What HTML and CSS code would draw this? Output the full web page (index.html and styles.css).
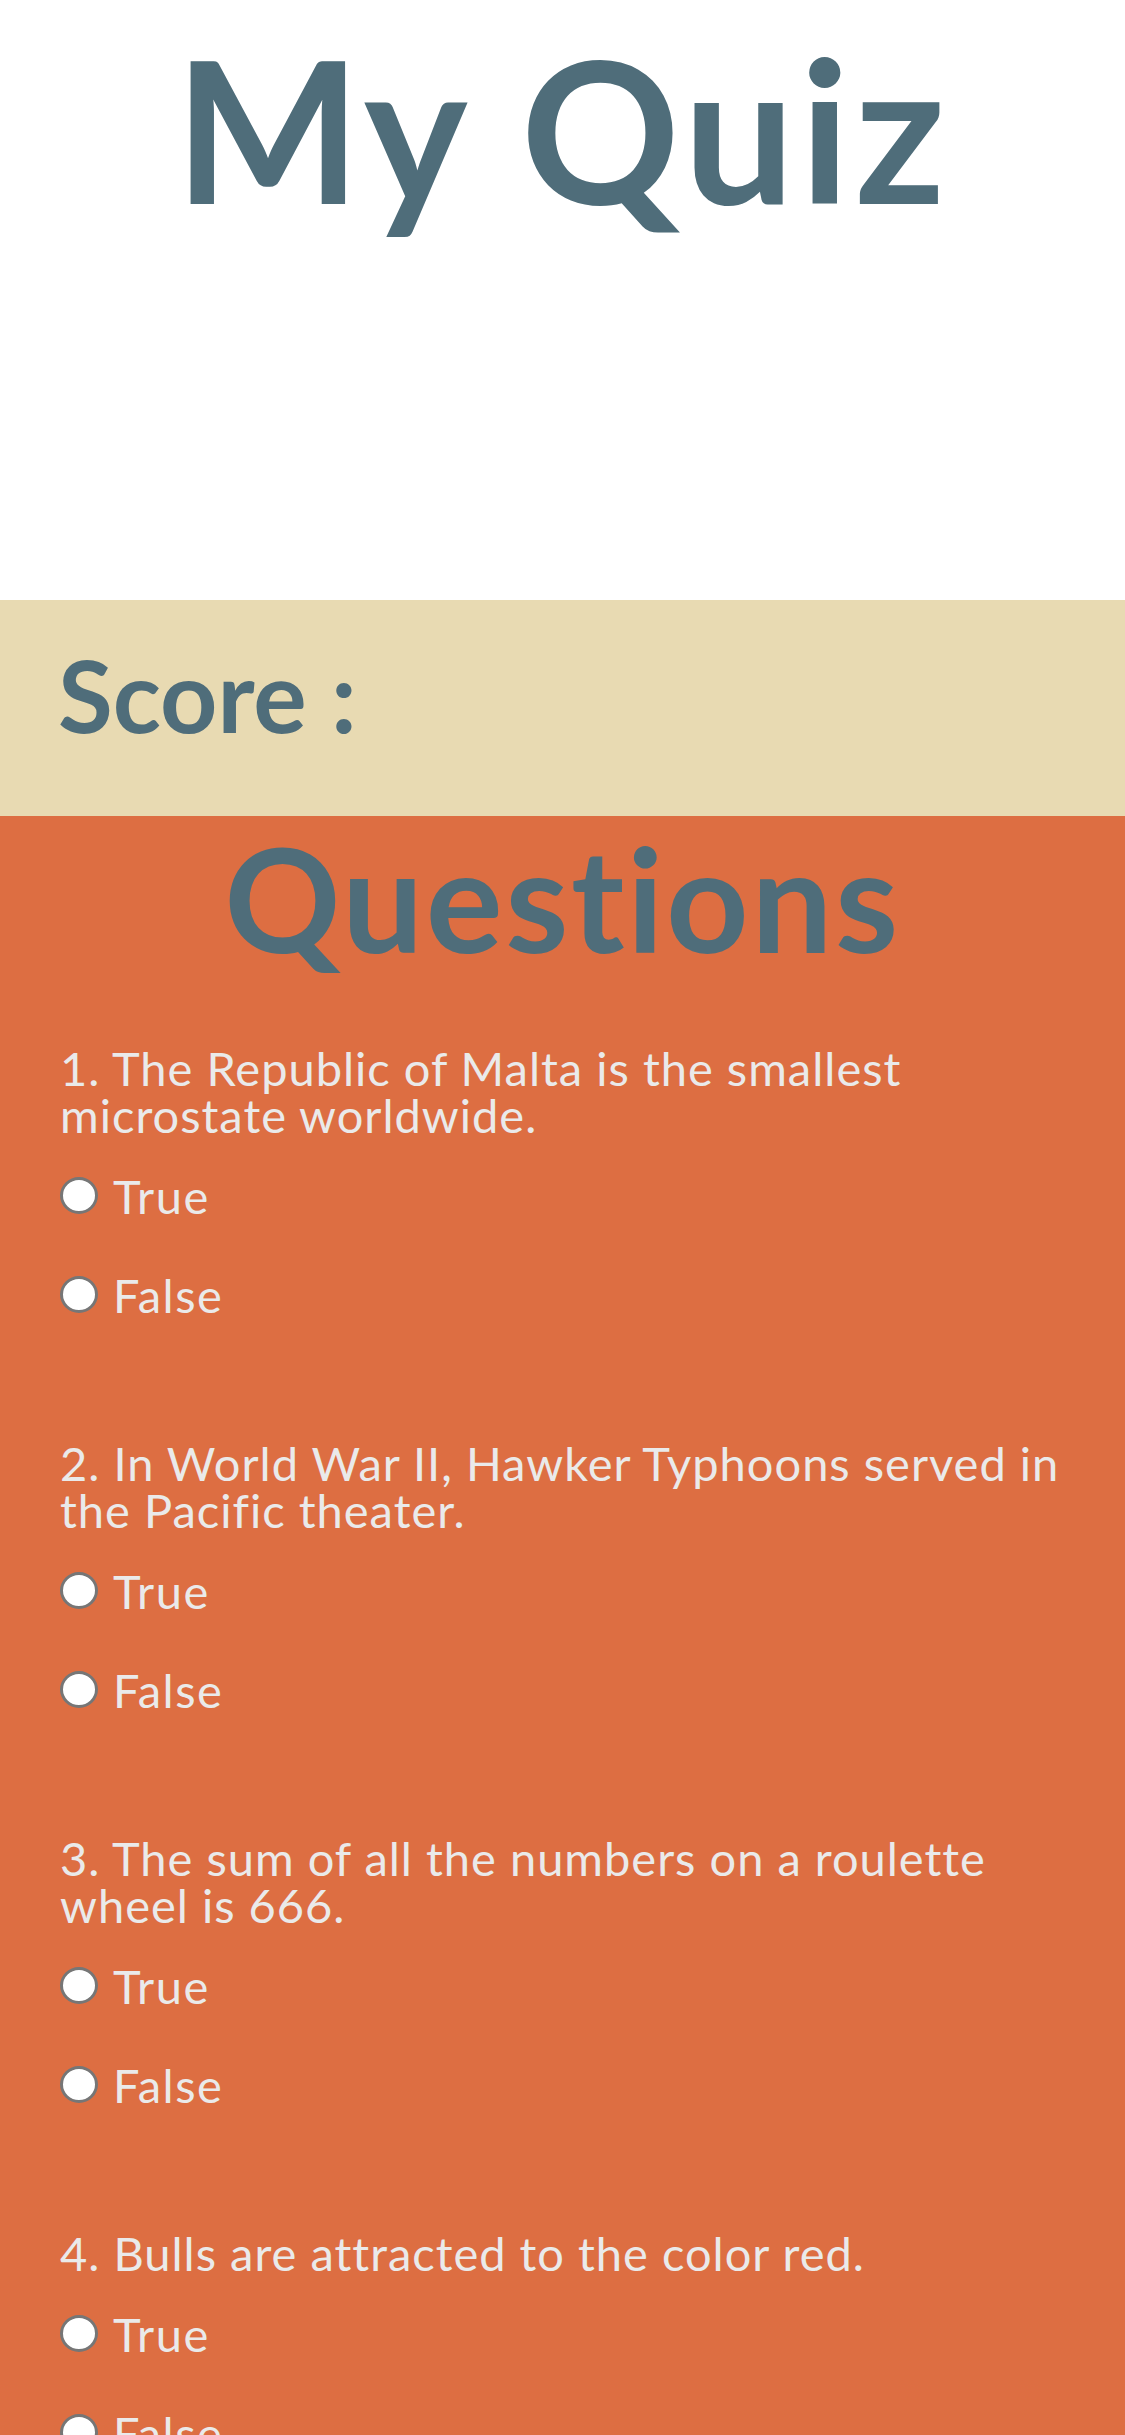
FILE: index.html
```html
<!DOCTYPE html>
<html lang="en">
<head>
<meta charset="utf-8">
<title>My Quiz</title>
<link rel="stylesheet" href="styles.css">
</head>
<body>
<header class="top">
  <h1 class="title">My Quiz</h1>
</header>
<section class="score-bar">
  <h2 class="score">Score :</h2>
</section>
<main class="quiz">
  <h2 class="quiz-title">Questions</h2>
  <div class="question-list">
    <div class="question">
      <p class="q-text">1. The Republic of Malta is the smallest microstate worldwide.</p>
      <div class="options">
        <label class="option"><input type="radio" name="q1" class="radio"><span class="opt-label">True</span></label>
        <label class="option"><input type="radio" name="q1" class="radio"><span class="opt-label">False</span></label>
      </div>
    </div>
    <div class="question">
      <p class="q-text">2. In World War II, Hawker Typhoons served in the Pacific theater.</p>
      <div class="options">
        <label class="option"><input type="radio" name="q2" class="radio"><span class="opt-label">True</span></label>
        <label class="option"><input type="radio" name="q2" class="radio"><span class="opt-label">False</span></label>
      </div>
    </div>
    <div class="question">
      <p class="q-text">3. The sum of all the numbers on a roulette wheel is 666.</p>
      <div class="options">
        <label class="option"><input type="radio" name="q3" class="radio"><span class="opt-label">True</span></label>
        <label class="option"><input type="radio" name="q3" class="radio"><span class="opt-label">False</span></label>
      </div>
    </div>
    <div class="question">
      <p class="q-text">4. Bulls are attracted to the color red.</p>
      <div class="options">
        <label class="option"><input type="radio" name="q4" class="radio"><span class="opt-label">True</span></label>
        <label class="option"><input type="radio" name="q4" class="radio"><span class="opt-label">False</span></label>
      </div>
    </div>
  </div>
</main>
</body>
</html>
```

FILE: styles.css
```css
* {
  box-sizing: border-box;
}

html, body {
  margin: 0;
  padding: 0;
}

body {
  font-family: Lato, "Open Sans", "Liberation Sans", sans-serif;
  background: #dd6e42;
  color: #eaeaea;
}

.top {
  background: #ffffff;
  height: 600px;
  padding-top: 10px;
}

.title {
  margin: 0;
  font-size: 197px;
  line-height: 1.2;
  font-weight: 700;
  letter-spacing: 5px;
  text-align: center;
  color: #4f6d7a;
}

.score-bar {
  background: #e8dab2;
  height: 216px;
  padding: 34px 60px 0 58px;
}

.score {
  margin: 0;
  font-size: 100px;
  line-height: 120px;
  font-weight: 700;
  color: #4f6d7a;
}

.quiz {
  padding: 10px 60px 80px 60px;
}

.quiz-title {
  margin: 0;
  font-size: 144px;
  line-height: 144px;
  font-weight: 700;
  letter-spacing: 2.5px;
  text-align: center;
  color: #4f6d7a;
}

.question-list {
  margin-top: 75px;
  display: flex;
  flex-direction: column;
  gap: 121px;
}

.q-text {
  margin: 0;
  font-size: 47px;
  line-height: 47px;
  font-weight: 400;
  letter-spacing: 1px;
}

.options {
  margin-top: 34px;
  display: flex;
  flex-direction: column;
  gap: 52px;
}

.option {
  display: block;
  font-size: 47px;
  line-height: 47px;
  letter-spacing: 1.5px;
}

.radio {
  appearance: none;
  -webkit-appearance: none;
  width: 38px;
  height: 37px;
  margin: 0 15px 0 0;
  border: 3px solid #767676;
  border-radius: 50%;
  background: #ffffff;
  vertical-align: baseline;
}
```
